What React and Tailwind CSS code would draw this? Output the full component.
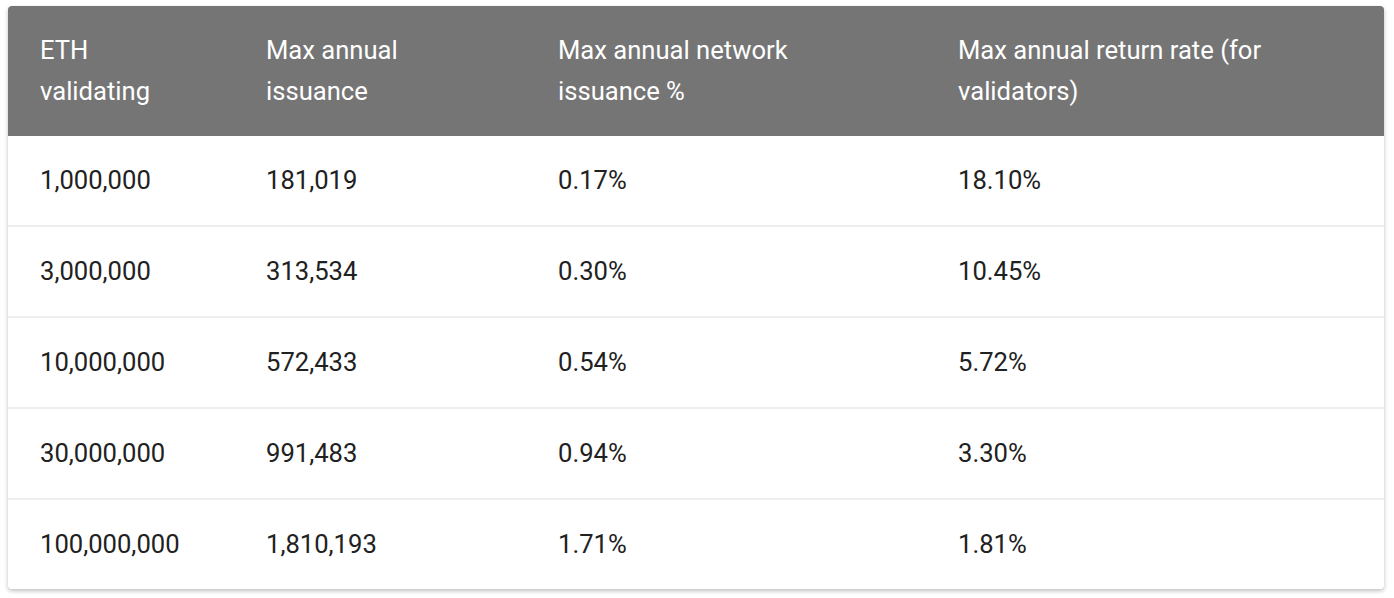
import React from 'react';

const rows = [
  ['1,000,000', '181,019', '0.17%', '18.10%'],
  ['3,000,000', '313,534', '0.30%', '10.45%'],
  ['10,000,000', '572,433', '0.54%', '5.72%'],
  ['30,000,000', '991,483', '0.94%', '3.30%'],
  ['100,000,000', '1,810,193', '1.71%', '1.81%'],
];

const headers = [
  ['ETH', 'validating'],
  ['Max annual', 'issuance'],
  ['Max annual network', 'issuance %'],
  ['Max annual return rate (for', 'validators)'],
];

const widths = ['w-[226px]', 'w-[292px]', 'w-[400px]', 'w-[458px]'];

const App = () => {
  return (
    <div className="bg-white min-h-[598px] pt-[6px] pl-[8px] font-['Roboto',sans-serif]">
      <div className="w-[1376px] rounded-[4px] overflow-hidden bg-white shadow-[0_2px_4px_rgba(0,0,0,0.25)]">
        <table className="w-full table-fixed border-collapse text-[25.6px] leading-[41px]">
          <thead>
            <tr className="bg-[#757575] text-white">
              {headers.map((h, i) => (
                <th key={i} className={`${widths[i]} text-left font-normal px-[32px] py-[24px] align-top`}>
                  {h[0]}
                  <br />
                  {h[1]}
                </th>
              ))}
            </tr>
          </thead>
          <tbody>
            {rows.map((r, idx) => (
              <tr key={idx} className={idx < rows.length - 1 ? 'border-b-2 border-[#eeeeee]' : ''}>
                {r.map((c, i) => (
                  <td key={i} className="px-[32px] py-[24px] text-[#212121]">
                    {c}
                  </td>
                ))}
              </tr>
            ))}
          </tbody>
        </table>
      </div>
    </div>
  );
};

export default App;
